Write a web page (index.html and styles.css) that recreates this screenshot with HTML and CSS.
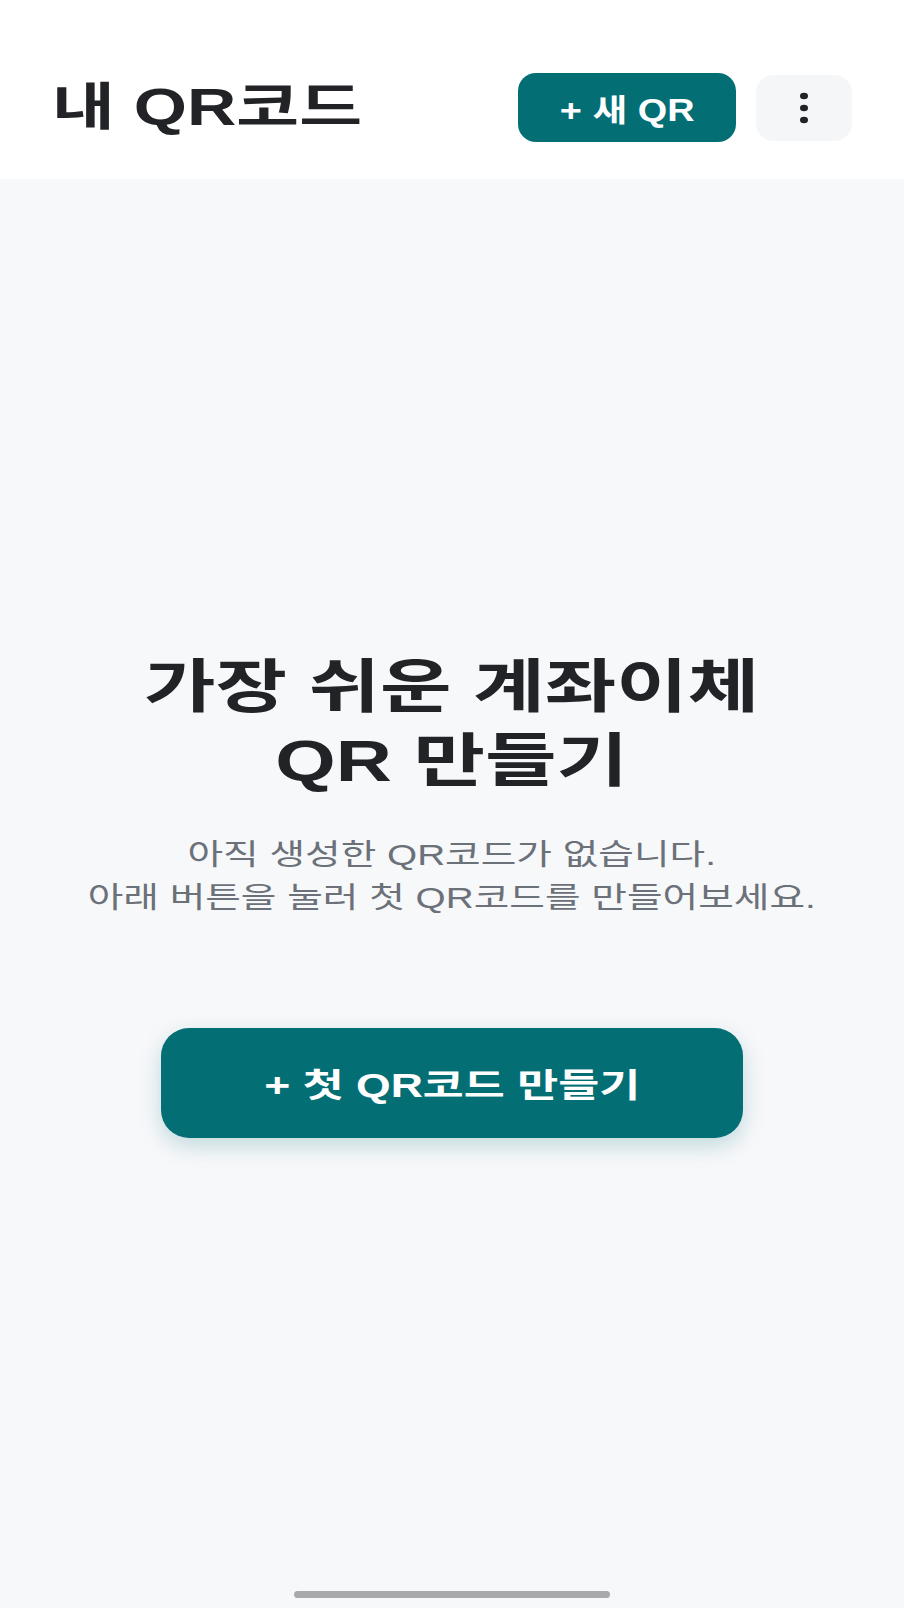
FILE: index.html
```html
<!DOCTYPE html>
<html lang="ko">
<head>
<meta charset="utf-8">
<title>내 QR코드</title>
<link rel="stylesheet" href="styles.css">
</head>
<body>
<div class="app">
  <header class="topbar">
    <h1 class="page-title"><span class="stretch">내 QR코드</span></h1>
    <div class="actions">
      <button class="btn-new"><span class="stretch">+ 새 QR</span></button>
      <button class="btn-menu" aria-label="메뉴">
        <svg width="10" height="34" viewBox="0 0 10 34">
          <ellipse cx="5" cy="5" rx="4" ry="3.2" fill="#212327"/>
          <ellipse cx="5" cy="17" rx="4" ry="3.2" fill="#212327"/>
          <ellipse cx="5" cy="29" rx="4" ry="3.2" fill="#212327"/>
        </svg>
      </button>
    </div>
  </header>
  <main class="empty">
    <h2 class="empty-title">가장 쉬운 계좌이체<br>QR 만들기</h2>
    <p class="empty-desc">아직 생성한 QR코드가 없습니다.<br>아래 버튼을 눌러 첫 QR코드를 만들어보세요.</p>
    <button class="btn-first"><span class="stretch-lg">+ 첫 QR코드 만들기</span></button>
  </main>
  <div class="home-indicator"></div>
</div>
</body>
</html>
```

FILE: styles.css
```css
* {
  box-sizing: border-box;
}

html, body {
  margin: 0;
  padding: 0;
}

body {
  font-family: "Liberation Sans", "Noto Sans CJK KR", sans-serif;
  background: #f7f8fa;
  color: #212327;
  overflow: hidden;
}

.app {
  min-height: 100vh;
  display: flex;
  flex-direction: column;
}

.topbar {
  background: #ffffff;
  height: 179px;
  padding: 36px 52px 0 52px;
  display: flex;
  align-items: center;
  justify-content: space-between;
}

.page-title {
  margin: 0;
  font-size: 51px;
  font-weight: 700;
  line-height: 1;
  color: #212327;
}

.stretch {
  display: inline-block;
  transform: scaleX(1.34);
  transform-origin: left center;
}

.actions {
  display: flex;
  align-items: center;
  gap: 20px;
}

.btn-new {
  width: 218px;
  height: 69px;
  border: none;
  border-radius: 18px;
  background: #046e75;
  color: #ffffff;
  font-family: inherit;
  font-size: 31px;
  font-weight: 700;
  display: flex;
  align-items: center;
  justify-content: center;
  padding: 0;
}

.btn-new .stretch {
  transform: scaleX(1.22);
  transform-origin: center;
}

.btn-menu {
  width: 96px;
  height: 66px;
  border: none;
  border-radius: 18px;
  background: #f5f6f8;
  display: flex;
  align-items: center;
  justify-content: center;
  padding: 0;
}

.empty {
  flex: 1;
  display: flex;
  flex-direction: column;
  align-items: center;
  padding-top: 471px;
}

.empty-title {
  margin: 0;
  text-align: center;
  font-size: 58px;
  font-weight: 700;
  line-height: 74px;
  color: #212327;
  transform: scaleX(1.34);
}

.empty-desc {
  margin: 36px 0 0;
  text-align: center;
  font-size: 29px;
  font-weight: 400;
  line-height: 43px;
  color: #6b7079;
  transform: scaleX(1.335);
}

.btn-first {
  margin-top: 108px;
  width: 582px;
  height: 110px;
  border: none;
  border-radius: 28px;
  background: #046e75;
  color: #ffffff;
  font-family: inherit;
  font-size: 33px;
  font-weight: 700;
  box-shadow: 0 8px 22px rgba(4, 110, 117, 0.22);
  display: flex;
  align-items: center;
  justify-content: center;
  padding: 0;
}

.stretch-lg {
  display: inline-block;
  transform: scaleX(1.35);
}

.home-indicator {
  width: 316px;
  height: 7px;
  border-radius: 4px;
  background: #a8a9ab;
  margin: 0 auto 10px;
}
```
